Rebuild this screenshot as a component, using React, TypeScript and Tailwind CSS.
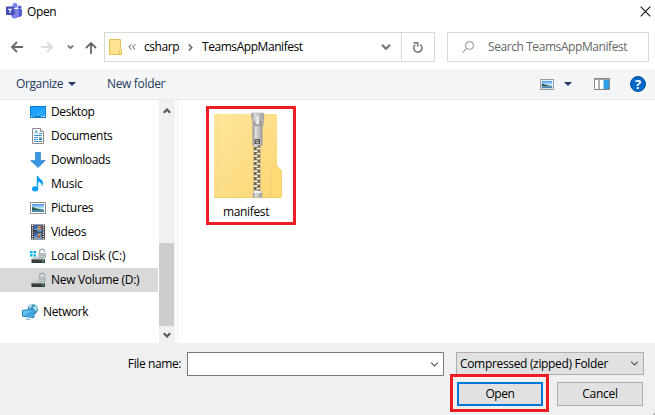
import React from "react";

const Chevron = ({ className, w = 1.5 }: { className: string; w?: number }) => (
  <svg className={className} viewBox="0 0 10 6" fill="none" stroke="currentColor" strokeWidth={w}>
    <path d="M1 .8 5 4.8 9 .8" />
  </svg>
);

const TeamsLogo = () => (
  <svg className="h-4 w-4" viewBox="0 0 16 16">
    <circle cx="13.7" cy="4.2" r="1.8" fill="#5059c9" />
    <circle cx="9" cy="2.6" r="2.5" fill="#7b83eb" />
    <path d="M11 6h4.2c.5 0 .8.3.8.8V11c0 2-1.3 3-3 3h-2z" fill="#5059c9" />
    <path d="M5 6h7c.6 0 .9.4.9.9V11c0 3-2 4.6-4.2 4.6S5 14 4.6 11z" fill="#7b83eb" />
    <path d="M5 6h4v6H4.7z" fill="#5a62c3" />
    <rect y="3.6" width="8" height="8.4" rx=".7" fill="#464eb8" />
    <path d="M2 5.7h4.2v1.1H4.7V10H3.5V6.8H2z" fill="#fff" />
  </svg>
);

const Picture = ({ className }: { className: string }) => (
  <svg className={className} viewBox="0 0 16 12" preserveAspectRatio="none">
    <defs>
      <linearGradient id="sky" x2="0" y2="1">
        <stop stopColor="#4a9ae8" />
        <stop offset=".6" stopColor="#d7edf9" />
        <stop offset="1" stopColor="#6297bc" />
      </linearGradient>
    </defs>
    <rect x=".5" y=".5" width="15" height="11" fill="#fff" stroke="#949494" />
    <rect x="2" y="2" width="12" height="8" fill="url(#sky)" />
    <path d="M2 5c2 0 3 1.4 5 1.5L14 8H2z" fill="#2d5c4c" />
    <path d="M2 8h12v2H2z" fill="#4787ae" />
  </svg>
);

const DesktopIcon = () => (
  <svg className="h-4 w-4" viewBox="0 0 16 16">
    <rect x=".5" y="2.5" width="15" height="11" fill="#1a9fff" stroke="#087fd5" />
    <path d="M1 13 15 3v10z" fill="#38adff" opacity=".5" />
    <path d="M1 12.5h14" stroke="#0877be" />
    <path d="M1 12.5h1M3 12.5h1M11 12.5h1M13 12.5h2" stroke="#fff" />
  </svg>
);

const DocumentIcon = () => (
  <svg className="h-4 w-4" viewBox="0 0 16 16">
    <path d="M2.5.5h8l3 3v12h-11z" fill="#fff" stroke="#8c8c8c" />
    <path d="M10.5.5v3h3" fill="#eee" stroke="#8c8c8c" />
    <path d="M4.5 5.5 6.3 2.5l1 3M9 5.5h3M4 7.5h8M4 9.5h4M4 11.5h4M4 13.5h8" fill="none" stroke="#218bd2" strokeWidth=".9" />
    <path d="M9 9h3v2H9z" fill="#6db1dc" />
    <path d="M9 11h3v1H9z" fill="#38705b" />
  </svg>
);

const DownloadIcon = () => (
  <svg className="h-4 w-4" viewBox="0 0 16 16">
    <path d="M5.5.5h5v8h4.8L8 15.5.7 8.5h4.8z" fill="#3a96e2" stroke="#2d7fc9" strokeWidth=".7" />
  </svg>
);

const MusicIcon = () => (
  <svg className="h-4 w-4" viewBox="0 0 16 16" fill="#0b9df1">
    <ellipse cx="5.1" cy="12.8" rx="3.1" ry="2.6" />
    <path d="M6.8 0h1.5c.3 2.6 4.7 3.5 4.7 6.8 0 1.5-.6 2.8-1.4 3.7.4-2.4-.4-4.2-3.4-4.8V13H6.8z" />
  </svg>
);

const VideoIcon = () => (
  <svg className="h-4 w-4" viewBox="0 0 16 16">
    <path d="M1 .5h14v15H1z" fill="#363636" />
    <path d="M2.5 1v14M13.5 1v14" stroke="#fff" strokeWidth="1.4" strokeDasharray="1.2 1" />
    <path d="M4 1h8v6.5H4zM4 8.5h8V15H4z" fill="#3567b5" />
    <path d="M4 5 7 4l5 2v1.5H4zM4 12l4-1 4 2v2H4z" fill="#729ac4" />
    <path d="M8 2h3v3H8zM8 9.5h3v2H8z" fill="#e4a437" />
    <path d="M9 3h3v1H9zM7 12h3v1H7z" fill="#c53331" />
    <path d="M4 6h3v1.5H4z" fill="#243043" />
  </svg>
);

const DriveIcon = ({ win = false }: { win?: boolean }) => (
  <svg className="h-4 w-4" viewBox="0 0 16 16">
    <path d="M3.5 8.5h9.5l2 3H1.5z" fill="#d0d1d1" />
    <path d="M1.5 11H15v4H1.5z" fill="#373b3e" />
    <path d="M2 11.3h12.5" stroke="#8b8f91" />
    <path d="M12 13h2" stroke="#39e7a1" />
    <path d="M9.7 5V3.2c0-2.9 5-2.9 5 0V4" fill="none" stroke="#9fa8ad" strokeWidth="1.2" />
    <path d="M8.5 5H16v5H8.5z" fill="#aab4ba" />
    <path d="M9 6.5h6.5M9 8.5h6.5" stroke="#c9d0d3" strokeWidth=".7" />
    {win && <path d="M0 3h2.6v2.3H0zM3.5 3H6v2.3H3.5zM0 6.2h2.6v2.3H0zM3.5 6.2H6v2.3H3.5z" fill="#00b5ef" />}
  </svg>
);

const NetworkIcon = () => (
  <svg className="h-4 w-4" viewBox="0 0 16 16">
    <circle cx="10.7" cy="5.2" r="5.2" fill="#3c8db9" />
    <path d="M7 2c1-1.3 3-2 4-1.5L9.5 3 7 5zM11 3l3-1.4 1.5 3-2 3-2-2z" fill="#a8dfed" />
    <path d="M.5 6.3 12 5.5v8L.5 12.3z" fill="#64c5f5" stroke="#2582b8" />
    <path d="m2 11.5 9-5.5v6.5z" fill="#3ca5df" />
    <path d="M6 13v2M3.5 15.3h5" stroke="#8ec1da" />
  </svg>
);

const places = [
  { label: "Desktop", icon: <DesktopIcon />, ls: "tracking-[-0.4px]" },
  { label: "Documents", icon: <DocumentIcon />, ls: "tracking-[-0.3px]" },
  { label: "Downloads", icon: <DownloadIcon />, ls: "tracking-[-0.36px]" },
  { label: "Music", icon: <MusicIcon />, ls: "tracking-[-0.2px]" },
  { label: "Pictures", icon: <Picture className="h-3 w-4" />, ls: "tracking-[-0.35px]" },
  { label: "Videos", icon: <VideoIcon />, ls: "tracking-[-0.35px]" },
  { label: "Local Disk (C:)", icon: <DriveIcon win />, ls: "tracking-[-0.16px]" },
  { label: "New Volume (D:)", icon: <DriveIcon />, ls: "tracking-[-0.31px]" },
];

const ZipFolder = () => (
  <svg className="mr-[7px] h-[86px] w-[68px]" viewBox="0 0 68 86">
    <defs>
      <linearGradient id="folder" x2="1" y2="1">
        <stop stopColor="#ffe69c" />
        <stop offset="1" stopColor="#fbd673" />
      </linearGradient>
      <linearGradient id="metal">
        <stop stopColor="#909090" />
        <stop offset=".3" stopColor="#e0e0e0" />
        <stop offset="1" stopColor="#9b9b9b" />
      </linearGradient>
      <pattern id="teeth" x="39.5" y="33" width="7" height="5" patternUnits="userSpaceOnUse">
        <path d="M0 0h8v5H0z" fill="#776747" />
        <path d="M0 .3h4v1.8H0zM3 2.8h4v1.8H3z" fill="#f6f1e2" />
      </pattern>
    </defs>
    <path d="M0 2h61q2 0 2 2v50l4.5 5v25q0 2-2 2H0z" fill="url(#folder)" />
    <path d="M57 85.5V59l5.5-5.5L68 59v24.5q0 2-2 2z" fill="#ffda76" stroke="#f0c862" strokeWidth=".6" />
    <path d="M3.5 2v84" stroke="#f3d37c" strokeWidth=".6" />
    <path d="M0 85.5h66" stroke="#e9c565" strokeWidth=".7" />
    <path d="M39.5 30h7v50h-7z" fill="url(#teeth)" />
    <path d="M38 1h11q1.5 0 1 3l-1 10H39L37.5 4Q37 1 38 1z" fill="url(#metal)" stroke="#a5a5a5" strokeWidth=".5" />
    <path d="M38.7 14h9.6v19.5h-9.6z" fill="url(#metal)" stroke="#a5a5a5" strokeWidth=".5" />
    <path d="M40.5 9v4h6V9" fill="none" stroke="#8f8f8f" strokeWidth="1.3" />
    <path d="M42 3.5h3v9h-3z" fill="#f0f0f0" stroke="#aaa" strokeWidth=".5" />
    <path d="M40.5 27h5.5v5h-5.5z" fill="#5c5751" />
    <path d="M41.5 28h3v1.3h-3zM42 30h3v1.2h-3z" fill="#b9b6af" />
    <path d="M39 79h9v6.5h-9z" fill="url(#metal)" stroke="#aaa" strokeWidth=".4" />
    <path d="M39.5 79h8v2h-8z" fill="#efefef" />
  </svg>
);

export default function App() {
  return (
    <div className="flex h-[415px] w-[655px] flex-col overflow-hidden bg-white font-['Open_Sans','Noto_Sans',sans-serif] text-[12px] leading-4 whitespace-nowrap text-black">
      <header className="flex h-8 items-start pt-[3px] pl-[6px]">
        <TeamsLogo />
        <span className="ml-[5px] pt-px tracking-[-0.4px]">Open</span>
        <svg className="mt-[3px] mr-[4px] ml-auto h-[11px] w-[11px]" viewBox="0 0 11 11" stroke="#111" strokeWidth="1.1">
          <path d="m.7.7 9.6 9.6M10.3.7.7 10.3" />
        </svg>
      </header>

      <nav className="flex h-[37px] items-start">
        <div className="flex h-[30px] w-[104px] shrink-0 items-center pl-[11px]">
          <svg className="h-3 w-3 shrink-0" viewBox="0 0 12 12" fill="none" stroke="#666" strokeWidth="1.8"><path d="M12 6H1M6 1 1 6l5 5" /></svg>
          <svg className="ml-[18px] h-3 w-3 shrink-0" viewBox="0 0 12 12" fill="none" stroke="#dcdcdc" strokeWidth="1.8"><path d="M0 6h11M6 1l5 5-5 5" /></svg>
          <Chevron className="ml-[14px] h-[4px] w-[7px] shrink-0 text-[#777]" w={2.6} />
          <svg className="mt-[2px] ml-[11px] h-3 w-3 shrink-0" viewBox="0 0 12 12" fill="none" stroke="#666" strokeWidth="1.8"><path d="M6 12V1M1 6l5-5 5 5" /></svg>
        </div>
        <div className="flex h-[30px] w-[331px] shrink-0 items-center border border-[#d9d9d9]">
          <svg className="ml-[4px] h-4 w-[13px]" viewBox="0 0 13 16">
            <path d="M.5.5h11v9l1 1v5H.5z" fill="#ffe391" stroke="#e9c34b" />
            <path d="M10.5 15.5v-4l1-1 1 1v4z" fill="#ffe391" stroke="#e9c34b" />
          </svg>
          <svg className="ml-[6px] h-[6px] w-[8px]" viewBox="0 0 8 6" fill="none" stroke="#555"><path d="M3.5.3.8 3l2.7 2.7M7.3.3 4.6 3l2.7 2.7" /></svg>
          <span className="ml-[8px] w-[35px] tracking-[-0.45px]">csharp</span>
          <svg className="ml-[9px] h-[7px] w-[5px]" viewBox="0 0 5 7" fill="none" stroke="#666" strokeWidth="1.6"><path d="m.7.5 3 3-3 3" /></svg>
          <span className="ml-[9px] w-[102px] tracking-[-0.44px]">TeamsAppManifest</span>
          <Chevron className="mr-[10px] ml-auto h-[6px] w-[10px] text-[#777]" w={2.2} />
          <div className="flex h-full w-[33px] items-center justify-center border-l border-[#d9d9d9]">
            <svg className="mt-px h-[11px] w-[10px]" viewBox="0 0 10 11" fill="none" stroke="#808080" strokeWidth="1.7"><path d="M7.2 2.6A4.1 4.1 0 1 1 2.3 2.8M.6.9h4.1v3.8" /></svg>
          </div>
        </div>
        <div className="ml-[12px] flex h-[30px] w-[202px] shrink-0 items-center border border-[#d9d9d9] text-[#666]">
          <svg className="ml-[14px] h-[12px] w-[12px]" viewBox="0 0 12 12" fill="none" stroke="#8a858c"><circle cx="7.5" cy="4.5" r="4" /><path d="M4.6 7.4.4 11.6" /></svg>
          <span className="ml-[14px] tracking-[-0.42px]">Search TeamsAppManifest</span>
        </div>
      </nav>

      <div className="flex h-[31px] shrink-0 items-center border-b border-[#e8e9eb] bg-[#f4f5f7] pl-4 text-[#1e395b]">
        <span className="w-[47px] tracking-[-0.38px]">Organize</span>
        <svg className="ml-[5px] h-[4px] w-[8px]" viewBox="0 0 8 4" fill="currentColor"><path d="M0 0h8L4 4z" /></svg>
        <span className="ml-[31px] tracking-[-0.33px]">New folder</span>
        <Picture className="ml-auto h-[11px] w-[14px]" />
        <svg className="ml-[10px] h-[4px] w-[8px]" viewBox="0 0 8 4" fill="currentColor"><path d="M0 0h8L4 4z" /></svg>
        <svg className="ml-[22px] h-[12px] w-[16px]" viewBox="0 0 16 12">
          <path d="M.5.5h15v11H.5z" fill="#fff" stroke="#85888b" />
          <path d="M0 1h16M5 2v9" stroke="#85888b" strokeWidth="1.3" />
          <path d="M9.5 2H15v9H9.5z" fill="#2e9ce6" />
        </svg>
        <div className="mr-[9px] ml-[20px] flex h-4 w-4 items-center justify-center rounded-full border border-[#0055a4] bg-[#0068c7] text-[13px] font-bold text-white">?</div>
      </div>

      <main className="flex h-[243px] shrink-0">
        <aside className="h-full w-[158px] shrink-0">
          {places.map((p, i) => (
            <div key={p.label} className={i === 7 ? "flex h-6 items-center bg-[#d9d9d9] pl-[30px]" : "flex h-6 items-center pl-[30px]"}>
              {p.icon}
              <span className={`ml-[5px] ${p.ls}`}>{p.label}</span>
            </div>
          ))}
          <div className="mt-2 flex h-6 items-center pl-[22px]">
            <NetworkIcon />
            <span className="ml-[5px] tracking-[-0.37px]">Network</span>
          </div>
        </aside>
        <div className="ml-px flex w-[16px] flex-col items-center bg-[#f0f0f0]">
          <Chevron className="mt-[8px] h-[6px] w-[8px] rotate-180 text-[#555]" w={2.6} />
          <div className="mt-[129px] mr-px h-[83px] w-[15px] bg-[#cdcdcd]" />
          <Chevron className="mt-[6px] h-[6px] w-[8px] text-[#555]" w={2.6} />
        </div>
        <div className="ml-[2px] flex-1 border-l border-[#f0f0f0] pt-[6px] pl-[28px]">
          <div className="flex h-[119px] w-[90px] flex-col items-center border-3 border-[#ed1c24] pt-[3px]">
            <ZipFolder />
            <span className="mt-[6px] mr-[10px] tracking-[-0.35px]">manifest</span>
          </div>
        </div>
      </main>

      <footer className="flex h-[72px] shrink-0 flex-col bg-[#f0f0f0] pt-[9px]">
        <div className="flex h-[22px] items-start">
          <label className="w-[187px] pt-[4px] pr-[6px] text-right tracking-[-0.4px]">File name:</label>
          <div className="flex h-6 w-[257px] items-center justify-end border border-[#7a7a7a] bg-white pr-[4px]">
            <Chevron className="h-[5px] w-[9px] text-[#555]" w={1.3} />
          </div>
          <div className="ml-[12px] flex h-[23px] w-[188px] items-center justify-between border border-[#adadad] bg-[#e1e1e1] pr-[4px] pl-[3px]">
            <span className="tracking-[-0.33px]">Compressed (zipped) Folder</span>
            <Chevron className="h-[5px] w-[9px] text-[#555]" w={1.3} />
          </div>
        </div>
        <div className="flex h-[38px] items-start pl-[450px]">
          <div className="h-[38px] w-[99px] border-3 border-[#ed1c24] pt-[5px] pl-[4px]">
            <button className="block h-6 w-[86px] border-2 border-[#0078d7] bg-[#e1e1e1] leading-[18px] tracking-[-0.4px]">Open</button>
          </div>
          <button className="mt-[8px] ml-[8px] block h-6 w-[86px] border border-[#adadad] bg-[#e1e1e1] leading-[20px] tracking-[-0.25px]">Cancel</button>
        </div>
        <div className="mt-px mr-0 ml-auto h-[2px] w-[2px] shrink-0 bg-[#bfbfbf]" />
      </footer>
    </div>
  );
}
